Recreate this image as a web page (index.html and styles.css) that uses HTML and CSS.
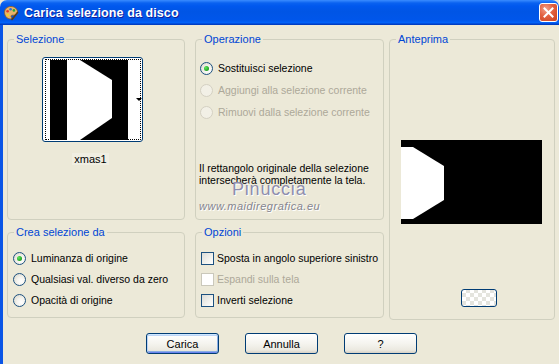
FILE: index.html
```html
<!DOCTYPE html>
<html>
<head>
    <title>Carica selezione da disco</title>
    <link rel="stylesheet" href="styles.css">
</head>
<body>
    <div class="window">
        <div class="titlebar">
            <svg class="app-icon" width="16" height="16" viewBox="0 0 16 16">
                <path d="M8 1.5c-4 0-6.5 2.6-6.5 6 0 3.2 2.4 6.5 5.8 6.5 1.6 0 1.7-1.2 1-2-.6-.8-.2-1.8.9-1.8h1.6c2.3 0 3.7-1.3 3.7-3.2C14.5 4 11.8 1.5 8 1.5z" fill="#e8b36a" stroke="#8a5a22" stroke-width="0.8"/>
                <circle cx="4.6" cy="6.2" r="1.3" fill="#e23a2a"/>
                <circle cx="7.6" cy="4.3" r="1.3" fill="#2f6fe0"/>
                <circle cx="10.9" cy="5.4" r="1.3" fill="#2aa83a"/>
                <circle cx="4.8" cy="10" r="1.3" fill="#f4d21f"/>
                <path d="M9 14.5l5.5-7" stroke="#5a3a14" stroke-width="1.6" stroke-linecap="round"/>
            </svg>
            <span class="title">Carica selezione da disco</span>
            <div class="close-btn">
                <svg width="11" height="11" viewBox="0 0 11 11">
                    <path d="M1.5 1.5l8 8M9.5 1.5l-8 8" stroke="#fff" stroke-width="2" stroke-linecap="square"/>
                </svg>
            </div>
        </div>

        <div class="client">
            <div class="groups">
                <div class="left-grid">
                    <fieldset class="group">
                        <legend>Selezione</legend>
                        <div class="thumb-btn">
                            <div class="thumb-focus">
                                <svg class="thumb-img" width="78" height="80" viewBox="0 0 78 80">
                                    <rect width="78" height="80" fill="#000"/>
                                    <polygon points="17,0 30,0 62,20 62,58 30,80 17,80" fill="#fff"/>
                                </svg>
                                <span class="thumb-arrow"></span>
                            </div>
                        </div>
                        <div class="thumb-name"><span>xmas1</span></div>
                    </fieldset>

                    <fieldset class="group op-group">
                        <legend>Operazione</legend>
                        <div class="options op-options">
                            <label class="opt"><span class="radio checked"></span>Sostituisci selezione</label>
                            <label class="opt disabled"><span class="radio"></span>Aggiungi alla selezione corrente</label>
                            <label class="opt disabled"><span class="radio"></span>Rimuovi dalla selezione corrente</label>
                        </div>
                        <p class="note">Il rettangolo originale della selezione intersecherà completamente la tela.</p>
                        <div class="watermark">
                            <span class="wm-name">Pinuccia</span>
                            <span class="wm-site">www.maidiregrafica.eu</span>
                        </div>
                    </fieldset>

                    <fieldset class="group">
                        <legend>Crea selezione da</legend>
                        <div class="options crea-options">
                            <label class="opt"><span class="radio checked"></span>Luminanza di origine</label>
                            <label class="opt"><span class="radio"></span>Qualsiasi val. diverso da zero</label>
                            <label class="opt"><span class="radio"></span>Opacità di origine</label>
                        </div>
                    </fieldset>

                    <fieldset class="group">
                        <legend>Opzioni</legend>
                        <div class="options check-options">
                            <label class="opt"><span class="check"></span>Sposta in angolo superiore sinistro</label>
                            <label class="opt disabled"><span class="check"></span>Espandi sulla tela</label>
                            <label class="opt"><span class="check"></span>Inverti selezione</label>
                        </div>
                    </fieldset>
                </div>

                <fieldset class="group preview-group">
                    <legend>Anteprima</legend>
                    <svg class="preview-img" width="141" height="84" viewBox="0 0 141 84">
                        <rect width="141" height="84" fill="#000"/>
                        <polygon points="0,7 12,7 43,26 43,60 12,79 0,79" fill="#fff"/>
                    </svg>
                    <div class="preview-btn"></div>
                </fieldset>
            </div>

            <div class="buttons">
                <button class="xp-btn default">Carica</button>
                <button class="xp-btn">Annulla</button>
                <button class="xp-btn">?</button>
            </div>
        </div>
    </div>
</body>
</html>
```

FILE: styles.css
```css
body {
    margin: 0;
    width: 559px;
    height: 364px;
    overflow: hidden;
    font-family: 'Liberation Sans', Arial, sans-serif;
    font-size: 10.5px;
    color: #000;
    background: #ece9d8;
}
.window {
    width: 559px;
    height: 364px;
    display: flex;
    flex-direction: column;
}
.titlebar {
    height: 25px;
    flex: none;
    display: flex;
    align-items: center;
    padding-left: 3px;
    background: linear-gradient(to bottom, #3a8cff 0, #0a62f0 3px, #0058ee 6px, #0055e5 45%, #0056ea 80%, #0262f8 90%, #0045d0 96%, #0035b5 100%);
    border-radius: 7px 7px 0 0;
}
.app-icon {
    flex: none;
    margin-top: 1px;
}
.title {
    margin-left: 5px;
    color: #fff;
    font-family: 'Liberation Sans', Arial, sans-serif;
    font-weight: bold;
    font-size: 12.5px;
    text-shadow: 1px 1px 0 #0f1d9b;
    letter-spacing: 0.1px;
}
.close-btn {
    margin-left: auto;
    margin-right: 1px;
    width: 19px;
    height: 19px;
    box-sizing: border-box;
    border: 1px solid #fff;
    border-radius: 3px;
    background: radial-gradient(circle at 35% 30%, #f3a08a 0, #e2603f 45%, #c8401f 100%);
    display: flex;
    align-items: center;
    justify-content: center;
}
.client {
    flex: 1;
    border-left: 3px solid #0a55e6;
    padding: 8px 0 0 4px;
}
.groups {
    display: flex;
    gap: 5px;
    align-items: flex-start;
}
.left-grid {
    display: grid;
    grid-template-columns: 178px 189px;
    grid-template-rows: 187px 92px;
    column-gap: 10px;
    row-gap: 6px;
}
.group {
    margin: 0;
    padding: 0;
    min-width: 0;
    box-sizing: border-box;
    border: 1px solid #d0d0bf;
    border-radius: 4px;
    position: relative;
}
.group legend {
    margin-left: 6px;
    padding: 0 2px;
    color: #0046d5;
    font-size: 11px;
    line-height: 13px;
}
.thumb-btn {
    margin: 11px 0 0 34px;
    width: 101px;
    height: 85px;
    box-sizing: border-box;
    border: 1px solid #003c74;
    border-radius: 3px;
    background: #fff;
    padding: 1px 1px 1px 2px;
}
.thumb-focus {
    height: 100%;
    box-sizing: border-box;
    border: 1px dotted #000;
    display: flex;
    align-items: center;
    padding-left: 4px;
}
.thumb-img {
    display: block;
    flex: none;
}
.thumb-arrow {
    margin-left: 8px;
    width: 0;
    height: 0;
    border-left: 3px solid transparent;
    border-right: 3px solid transparent;
    border-top: 3px solid #000;
}
.thumb-name {
    margin-top: 11px;
    padding-left: 32px;
    width: 101px;
    text-align: center;
    font-size: 11px;
    line-height: 13px;
}
.thumb-name span {
    background: #f0eee2;
    padding: 0 2px;
}
.options {
    display: flex;
    flex-direction: column;
}
.opt {
    display: flex;
    align-items: center;
    height: 13px;
    line-height: 13px;
    white-space: nowrap;
}
.opt.disabled {
    color: #aca899;
}
.op-options {
    padding: 16px 0 0 4px;
    gap: 9px;
}
.crea-options {
    padding: 13px 0 0 5px;
    gap: 8px;
}
.check-options {
    padding: 13px 0 0 5px;
    gap: 8px;
}
.radio {
    flex: none;
    width: 13px;
    height: 13px;
    box-sizing: border-box;
    border: 1px solid #1c5180;
    border-radius: 50%;
    background: radial-gradient(circle at 65% 65%, #fff 0, #f4f3ee 40%, #d5d2c4 100%);
    margin-right: 5px;
    display: flex;
    align-items: center;
    justify-content: center;
}
.radio.checked::after {
    content: '';
    width: 5px;
    height: 5px;
    border-radius: 50%;
    background: radial-gradient(circle at 35% 35%, #5ee85e 0, #21a121 70%);
}
.disabled .radio {
    border-color: #d4d0c2;
    background: #f2f0e6;
}
.check {
    flex: none;
    width: 13px;
    height: 13px;
    box-sizing: border-box;
    border: 1px solid #1c5180;
    background: linear-gradient(135deg, #dcdcd7 0, #f2f2ee 60%, #fff 100%);
    margin-right: 3px;
}
.disabled .check {
    border-color: #cac8bb;
    background: #fff;
}
.note {
    margin: 43px 0 0 3px;
    line-height: 12px;
    width: 180px;
}
.watermark {
    position: absolute;
    left: 3px;
    top: 136px;
    display: flex;
    flex-direction: column;
    pointer-events: none;
}
.wm-name {
    margin-left: 33px;
    font-size: 18px;
    line-height: 14px;
    letter-spacing: 0.8px;
    color: #8e8eae;
    text-shadow: 1px 1px 0 #fff;
}
.wm-site {
    margin-top: 4px;
    font-size: 11px;
    line-height: 12px;
    font-style: italic;
    letter-spacing: 0.5px;
    color: #85858f;
    text-shadow: 1px 1px 0 #fff;
}
.preview-group {
    width: 166px;
    height: 287px;
}
.preview-img {
    display: block;
    margin: 94px 0 0 11px;
}
.preview-btn {
    margin: 65px 0 0 71px;
    width: 36px;
    height: 18px;
    box-sizing: border-box;
    border: 1px solid #003c74;
    border-radius: 3px;
    background:
        repeating-conic-gradient(#ffffff 0 25%, #e4e4de 0 50%) 8px 3px / 8px 8px,
        #f6f6f2;
}
.buttons {
    display: flex;
    gap: 26px;
    padding-left: 139px;
    margin-top: 13px;
}
.xp-btn {
    width: 73px;
    height: 21px;
    box-sizing: border-box;
    border: 1px solid #003c74;
    border-radius: 3px;
    background: linear-gradient(to bottom, #ffffff 0, #f5f4ef 50%, #ebe9e0 85%, #d6d0c5 100%);
    font-family: 'Liberation Sans', Arial, sans-serif;
    font-size: 11px;
    color: #000;
    padding: 0;
}
.xp-btn.default {
    box-shadow: inset 0 1px 0 #cee7ff, inset 1px 0 0 #bcd4f6, inset -1px 0 0 #89ade4, inset 0 -1px 0 #6982ee, inset 0 2px 0 #bcd4f6, inset 0 -2px 0 #89ade4;
}
```
